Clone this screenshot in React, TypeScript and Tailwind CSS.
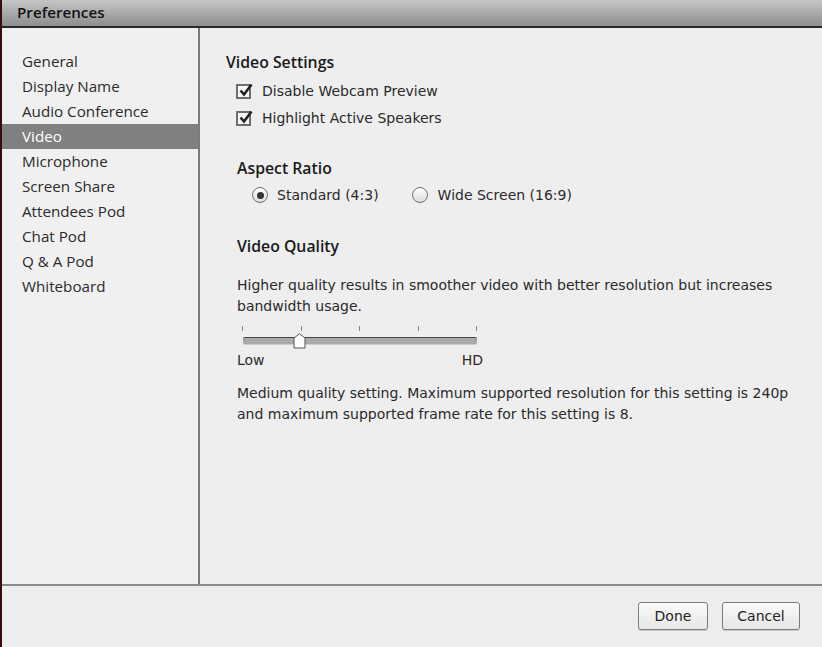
import { useState } from "react"

const sections = [
  "General",
  "Display Name",
  "Audio Conference",
  "Video",
  "Microphone",
  "Screen Share",
  "Attendees Pod",
  "Chat Pod",
  "Q & A Pod",
  "Whiteboard",
]

const heading = "font-['Open_Sans','Noto_Sans',sans-serif] font-semibold text-[15.8px] text-[#1a1a1a]"
const body = "font-['DejaVu_Sans',sans-serif] text-[14px] text-[#2a2a2a]"

function Checkbox({ checked }: { checked: boolean }) {
  return (
    <div className="relative w-[15px] h-[15px] border-2 border-[#6e6e6e] bg-[#f7f7f7] shrink-0">
      {checked && (
        <svg className="absolute -top-[4px] left-[0px]" width="16" height="16" viewBox="0 0 16 16">
          <path d="M2.5 8.5 L6 12.5 L13.5 2.5" fill="none" stroke="#222" strokeWidth="2.6" strokeLinejoin="miter" />
        </svg>
      )}
    </div>
  )
}

function Radio({ checked }: { checked: boolean }) {
  return (
    <div className="w-[16px] h-[16px] rounded-full border border-[#707070] bg-gradient-to-b from-[#ffffff] to-[#dcdcdc] flex items-center justify-center shrink-0">
      {checked && <div className="w-[7px] h-[7px] rounded-full bg-[#333]" />}
    </div>
  )
}

export default function App() {
  const [selected, setSelected] = useState("Video")
  const ticks = [0, 1, 2, 3, 4]

  return (
    <div className="w-[822px] h-[647px] flex bg-[#ededed] overflow-hidden">
      <div className="w-[2px] bg-[#3a0a0a]" />
      <div className="flex-1 flex flex-col">
        {/* title bar */}
        <div className="h-[28px] bg-gradient-to-b from-[#c6c6c6] to-[#8e8e8e] border-b-2 border-[#2a2a2a] flex items-center pl-[15px] pb-[1px]">
          <span className="font-['Open_Sans','Noto_Sans',sans-serif] font-semibold text-[15.2px] text-[#111]">Preferences</span>
        </div>

        <div className="flex-1 flex border-b-2 border-[#8a8a8a]">
          {/* sidebar */}
          <div className="w-[198px] bg-[#f0f0f0] border-r-2 border-[#7a7a7a] pt-[21px]">
            {sections.map((s) => (
              <div
                key={s}
                onClick={() => setSelected(s)}
                className={
                  "h-[25px] flex items-center pl-[20px] font-['Open_Sans','Noto_Sans',sans-serif] font-medium text-[15.2px] " +
                  (selected === s ? "bg-[#808080] text-white" : "text-[#2b2b2b]")
                }
              >
                {s}
              </div>
            ))}
          </div>

          {/* content */}
          <div className="flex-1 bg-[#eeeeee] pl-[26px] pt-[23px]">
            <div className={heading + " leading-[22px]"}>Video Settings</div>
            <div className="flex flex-col gap-[7px] mt-[8px] pl-[10px]">
              <div className="flex items-center gap-[11px] h-[20px]">
                <Checkbox checked />
                <span className={body}>Disable Webcam Preview</span>
              </div>
              <div className="flex items-center gap-[11px] h-[20px]">
                <Checkbox checked />
                <span className={body}>Highlight Active Speakers</span>
              </div>
            </div>

            <div className="pl-[11px]">
              <div className={heading + " leading-[22px] mt-[29px]"}>Aspect Ratio</div>
              <div className="flex items-center mt-[5px] h-[22px] pl-[15px]">
                <Radio checked />
                <span className={body + " ml-[9px]"}>Standard (4:3)</span>
                <div className="ml-[33px]">
                  <Radio checked={false} />
                </div>
                <span className={body + " ml-[10px]"}>Wide Screen (16:9)</span>
              </div>

              <div className={heading + " leading-[22px] mt-[29px]"}>Video Quality</div>

              <p className={body + " leading-[21px] mt-[18px] w-[560px]"}>
                Higher quality results in smoother video with better resolution but increases bandwidth usage.
              </p>

              {/* slider */}
              <div className="relative w-[246px] h-[29px] mt-[5px]">
                {ticks.map((t) => (
                  <div
                    key={t}
                    className="absolute top-[4px] w-px h-[5px] bg-[#888]"
                    style={{ left: 5 + t * 58.5 }}
                  />
                ))}
                <div className="absolute left-[6px] top-[15px] w-[234px] h-[8px] rounded-[2px] bg-[#a9a9a9] border-t border-[#444] border-b border-b-[#cfcfcf]" />
                <svg className="absolute left-[56px] top-[11px]" width="13" height="16" viewBox="0 0 13 16">
                  <path d="M1 5 L6.5 0.8 L12 5 L12 15 L1 15 Z" fill="#fdfdfd" stroke="#555" strokeWidth="1" />
                </svg>
              </div>
              <div className={body + " flex justify-between w-[246px] leading-[18px]"}>
                <span>Low</span>
                <span>HD</span>
              </div>

              <p className={body + " leading-[21px] mt-[14px] w-[560px]"}>
                Medium quality setting. Maximum supported resolution for this setting is 240p and maximum supported frame rate for this setting is 8.
              </p>
            </div>
          </div>
        </div>

        {/* footer */}
        <div className="h-[61px] bg-[#ededed] flex items-start justify-end gap-[14px] pt-[16px] pr-[22px]">
          <button className={body + " w-[70px] h-[28px] rounded-[3px] border border-[#7c7c7c] bg-gradient-to-b from-[#fafafa] to-[#e6e6e6] shadow-[0_1px_0_#c8c8c8] text-[#222]"}>
            Done
          </button>
          <button className={body + " w-[78px] h-[28px] rounded-[3px] border border-[#7c7c7c] bg-gradient-to-b from-[#fafafa] to-[#e6e6e6] shadow-[0_1px_0_#c8c8c8] text-[#222]"}>
            Cancel
          </button>
        </div>
      </div>
    </div>
  )
}
